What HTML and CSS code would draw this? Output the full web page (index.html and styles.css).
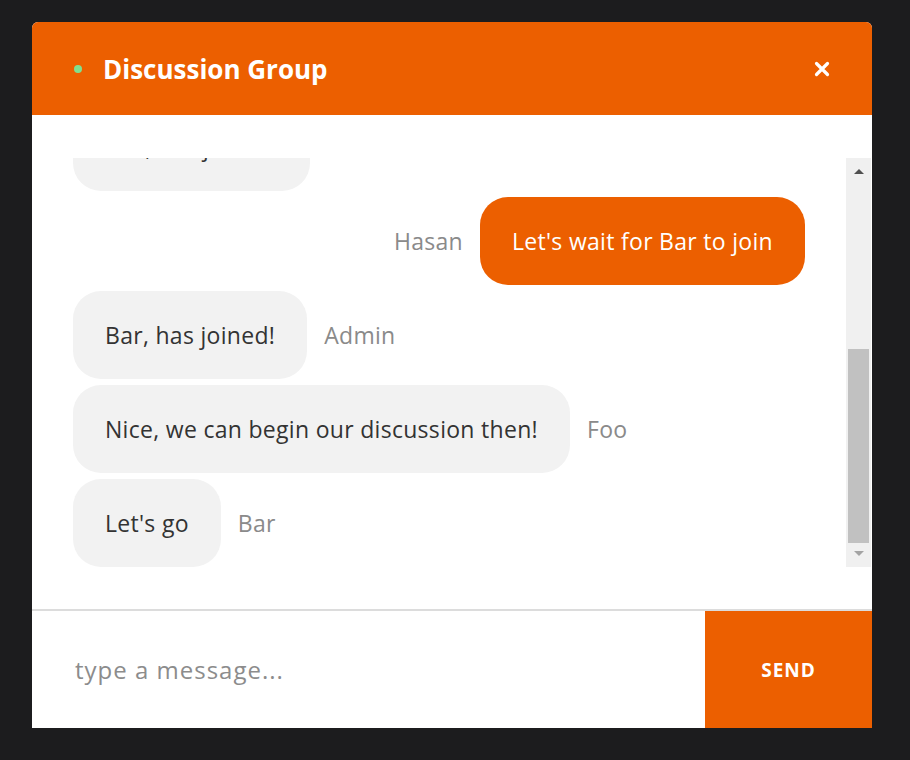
FILE: index.html
```html
<!DOCTYPE html>
<html lang="en">
<head>
<meta charset="utf-8">
<title>Discussion Group</title>
<link rel="stylesheet" href="styles.css">
</head>
<body>
<div class="chat">
  <header class="chat-header">
    <span class="status-dot"></span>
    <h1 class="chat-title">Discussion Group</h1>
    <button class="close-btn" aria-label="Close">
      <svg width="16" height="16" viewBox="0 0 16 16"><path d="M2.5 2.5 L13.5 13.5 M13.5 2.5 L2.5 13.5" stroke="#fff" stroke-width="3.2" stroke-linecap="round"/></svg>
    </button>
  </header>
  <div class="chat-body">
    <div class="scroll-area">
      <div class="messages">
        <div class="msg incoming"><div class="bubble">Foo, has joined!</div><span class="author">Admin</span></div>
        <div class="msg outgoing"><span class="author">Hasan</span><div class="bubble">Let's wait for Bar to join</div></div>
        <div class="msg incoming"><div class="bubble">Bar, has joined!</div><span class="author">Admin</span></div>
        <div class="msg incoming"><div class="bubble">Nice, we can begin our discussion then!</div><span class="author">Foo</span></div>
        <div class="msg incoming"><div class="bubble">Let's go</div><span class="author">Bar</span></div>
      </div>
      <div class="scrollbar">
        <span class="arrow up"></span>
        <div class="track"><div class="thumb"></div></div>
        <span class="arrow down"></span>
      </div>
    </div>
  </div>
  <div class="composer">
    <div class="input">type a message...</div>
    <button class="send-btn">SEND</button>
  </div>
</div>
</body>
</html>
```
FILE: styles.css
```css
* { box-sizing: border-box; }
html, body { margin: 0; height: 100%; }
body {
  background: #1c1c1e;
  padding: 22px 0 0 32px;
  font-family: "Open Sans", Lato, sans-serif;
}
.chat {
  width: 840px;
  background: #fff;
  border-radius: 6px 6px 0 0;
  overflow: hidden;
}
.chat-header {
  height: 93px;
  background: #ec5f00;
  display: flex;
  align-items: center;
  padding: 0 42px 0 42px;
}
.status-dot {
  width: 8px;
  height: 8px;
  border-radius: 50%;
  background: #7fe08f;
  margin-right: 21px;
}
.chat-title {
  margin: 0;
  color: #fff;
  font-size: 26px;
  font-weight: 700;
  letter-spacing: 0;
  flex: 1;
}
.close-btn {
  border: 0;
  background: none;
  padding: 0;
  width: 16px;
  height: 16px;
  display: flex;
}
.chat-body {
  padding: 43px 0 42px 0;
  border-bottom: 2px solid #dcdcdc;
}
.scroll-area {
  display: flex;
  height: 409px;
}
.messages {
  flex: 1;
  overflow: hidden;
  display: flex;
  flex-direction: column;
  justify-content: flex-end;
  gap: 6px;
  padding: 0 41px;
}
.msg {
  display: flex;
  align-items: center;
  flex-shrink: 0;
  gap: 17px;
}
.msg.outgoing { justify-content: flex-end; }
.bubble {
  height: 88px;
  display: flex;
  align-items: center;
  padding: 0 32px;
  border-radius: 28px;
  background: #f2f2f2;
  color: #333;
  font-size: 23px;
  letter-spacing: 0.3px;
}
.outgoing .bubble {
  background: #ec5f00;
  color: #fff;
}
.author {
  color: #8a8a8a;
  font-size: 23px;
  letter-spacing: 0.3px;
}
.scrollbar {
  width: 25px;
  background: #f0f0f0;
  display: flex;
  flex-direction: column;
  align-items: center;
  padding: 0 0 1px 0;
  margin-right: 1px;
}
.arrow {
  width: 0;
  height: 0;
  border-left: 5px solid transparent;
  border-right: 5px solid transparent;
  flex-shrink: 0;
}
.arrow.up {
  border-bottom: 5px solid #505050;
  margin: 11px 0 0;
}
.arrow.down {
  border-top: 5px solid #a3a3a3;
  margin: 0 0 10px;
}
.track {
  flex: 1;
  width: 100%;
  display: flex;
  flex-direction: column;
  justify-content: flex-end;
  padding: 0 2px 8px;
}
.thumb {
  height: 194px;
  background: #c1c1c1;
}
.composer {
  display: flex;
  height: 117px;
}
.input {
  flex: 1;
  display: flex;
  align-items: center;
  padding: 0 43px;
  color: #8c8c8c;
  font-size: 24px;
  letter-spacing: 1px;
}
.send-btn {
  width: 167px;
  border: 0;
  background: #ec5f00;
  color: #fff;
  font-family: inherit;
  font-size: 19px;
  font-weight: 700;
  letter-spacing: 1px;
}
```
